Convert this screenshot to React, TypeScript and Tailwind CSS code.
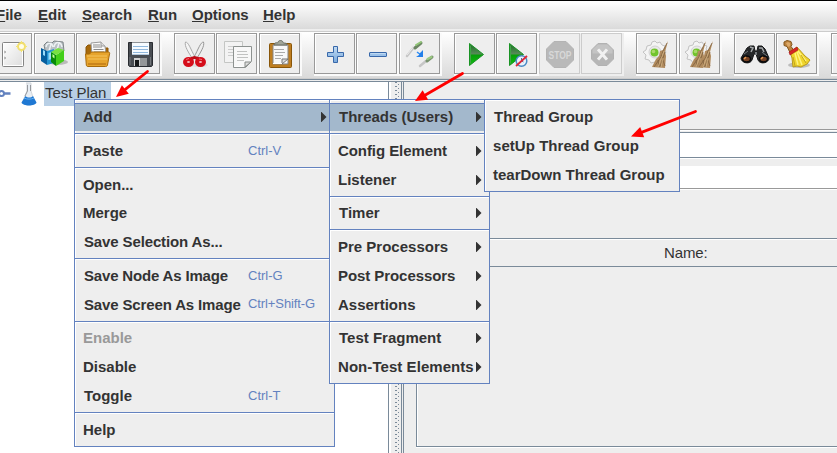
import React from "react";

type Item = {
  label: string;
  keys?: string;
  sub?: boolean;
  selected?: boolean;
  disabled?: boolean;
  h: string;
  tracking?: string;
  indent?: string;
};

const Stroke = ({ children }: { children: React.ReactNode }) => (
  <svg width="39" height="39" viewBox="1 1 39 39" className="block">
    {children}
  </svg>
);

const NewIcon = () => (
  <Stroke>
    <defs>
      <linearGradient id="page" x1="0" y1="0" x2="1" y2="1">
        <stop offset="0" stopColor="#fff" />
        <stop offset="1" stopColor="#dcdcdc" />
      </linearGradient>
    </defs>
    <rect x="11.500" y="9.500" width="21" height="24" rx="1" fill="url(#page)" stroke="#858585" />
    <rect x="12.500" y="10.500" width="19" height="22" fill="none" stroke="#fff" />
    <path d="M13 18l2 1-2 1M13 24l2 1-2 1" fill="none" stroke="#aaa" />
    <circle cx="30.500" cy="13.500" r="3.500" fill="#fffde8" stroke="#f2df6d" strokeWidth="2" />
    <path d="M30.500 8v2M30.500 17v2M25 13.500h2M34 13.500h2" stroke="#f5e66e" />
  </Stroke>
);

const TemplatesIcon = () => (
  <Stroke>
    <ellipse cx="24" cy="29" rx="10" ry="3" fill="#bbb" />
    <path d="M10 12l3-3 5 1 2-2 9 1 1 9-18 4z" fill="#b9c0c4" stroke="#7d8588" />
    <path d="M12 14c1-5 6-5 7 0M20 14c1-6 7-6 8 0M15 18l2-7M23 17l2-7" fill="none" stroke="#eef2f4" strokeWidth="1.500" />
    <path d="M7 15l6 3v14l-6-4z" fill="#065f9f" />
    <path d="M13 18l7-2v14l-7 2z" fill="#2696d2" />
    <path d="M9 17l2 1v5l-2-1zM14.500 20l3-1v7l-3 1z" fill="#9bdcf8" />
    <path d="M17 19l5 3v11l-5-4z" fill="#078a09" />
    <path d="M22 22l8-5v11l-8 5z" fill="#43cf19" />
    <path d="M17 19l7-4 6 2-8 5z" fill="#77e142" />
    <path d="M18.500 21l2 1.500v3l-2-1.500z" fill="#c5ff9c" />
  </Stroke>
);

const OpenIcon = () => (
  <Stroke>
    <path d="M10 17V14l2-2h4l2 3h14v7H10z" fill="#a7690b" stroke="#8b5709" />
    <path d="M15 10l10-1 4 4 1 9-14 1z" fill="#fafafa" stroke="#999" />
    <path d="M17 12h7M17 14h9M17.500 16.500h10M18 19h10" stroke="#8b8b8b" />
    <path d="M25 9v4h4" fill="#ddd" stroke="#999" />
    <path d="M9.500 21h4l2-2h17c1 0 1.500 1 1 2l-2 11c0 1-1 1.500-2 1.500H12c-1 0-1.500-.500-1.700-1.500z" fill="#e7a42c" stroke="#a76a0b" />
    <path d="M11 23h20M12 26h19" stroke="#f3c45e" />
    <path d="M12 31h18" stroke="#ca841b" strokeWidth="2" />
  </Stroke>
);

const SaveIcon = () => (
  <Stroke>
    <path d="M9.500 9.500h24v23l-1 1h-22l-1-1z" fill="#494d52" stroke="#292c31" />
    <rect x="13" y="9.500" width="17" height="12.500" fill="#f6fbff" />
    <path d="M14 13.500h15M14 16.500h15M14 19.500h15" stroke="#90b8dd" />
    <path d="M13 21.500h17" stroke="#b0c7dc" />
    <rect x="15" y="25" width="13" height="8" fill="#cfd0d0" />
    <path d="M21 25h7v8h-7z" fill="#949799" />
    <rect x="16" y="27" width="4" height="6" fill="#17191b" />
    <path d="M11 24v8M31.500 24v8" stroke="#73777b" />
  </Stroke>
);

const CutIcon = () => (
  <Stroke>
    <ellipse cx="25" cy="32" rx="9" ry="2" fill="#ddd" />
    <path d="M11.500 9c3 0 5 7 10 16l-3 1C15 20 10 13 11.500 9z" fill="#f4f4f4" stroke="#aaa" />
    <path d="M29.500 9c-3 0-5 7-10 16l3 1c3.500-6 8.500-13 7-17z" fill="#eee" stroke="#969696" />
    <path d="M17 24l3.500-1 4 1 3 4-4-1-3-1-3 1-4 1z" fill="#bb0c16" />
    <ellipse cx="14.500" cy="29" rx="3.500" ry="3" fill="#f4b8ba" stroke="#d50d1a" strokeWidth="4" />
    <ellipse cx="26.500" cy="29" rx="3.500" ry="3" fill="#f4b8ba" stroke="#d50d1a" strokeWidth="4" />
    <path d="M12 26.500l3-1M25 26l3 .500" stroke="#f46a70" />
  </Stroke>
);

const CopyIcon = () => (
  <Stroke>
    <path d="M8.500 8.500h18v21h-18z" fill="#f3f3f3" stroke="#c4c6c4" />
    <path d="M12 13.500h10M12 16.500h10M12 19.500h6M12 22.500h5" stroke="#ccc" />
    <path d="M17.500 13.500h18v15l-6 6h-12z" fill="#f8f8f8" stroke="#8d9290" />
    <path d="M21 18.500h10M21 21.500h11M21 24.500h11M21 27.500h7" stroke="#c1c2c1" />
    <path d="M29 34v-5h6z" fill="#ddd" stroke="#878b88" />
    <path d="M18.500 33.500h8" stroke="#fff" />
  </Stroke>
);

const PasteIcon = () => (
  <Stroke>
    <rect x="10.500" y="10.500" width="22" height="24" rx="1" fill="#bf7e20" stroke="#895609" />
    <path d="M14 12h15v19H14z" fill="#f8f8f8" stroke="#858585" />
    <path d="M15 12c1-4 4-1 4-3 1-2 4-2 5 0 0 2 4 0 4 3z" fill="#a2a699" stroke="#686c63" />
    <path d="M15 16.500h10M16 19.500h10M16 22.500h8M16 25.500h6" stroke="#aaa" />
    <path d="M23 31v-5h6z" fill="#ddd" stroke="#777" />
    <path d="M14 30.500h9" stroke="#fff" />
  </Stroke>
);

const PlusIcon = () => (
  <Stroke>
    <defs>
      <linearGradient id="blueBar" x1="0" y1="0" x2="0" y2="1">
        <stop offset="0" stopColor="#c3dcf3" />
        <stop offset="1" stopColor="#79a9dc" />
      </linearGradient>
    </defs>
    <path d="M19.500 13.500h4v6h6v4h-6v6h-4v-6h-6v-4h6z" fill="url(#blueBar)" stroke="#3868aa" strokeLinejoin="round" />
  </Stroke>
);

const MinusIcon = () => (
  <Stroke>
    <rect x="13.500" y="19.500" width="17" height="4" rx="0.500" fill="#9cc2e9" stroke="#3868aa" />
    <path d="M14.500 20.500h15" stroke="#c0daf2" />
  </Stroke>
);

const ToggleIcon = () => (
  <Stroke>
    <g strokeLinecap="round">
      <path d="M8 23l7-9" stroke="#c6c6c6" strokeWidth="2.500" />
      <path d="M8.500 21.500l7-9" stroke="#eee" />
      <path d="M16 15l6-5" stroke="#6b8563" strokeWidth="3" />
      <path d="M17 12l5-3" stroke="#91c677" strokeWidth="2" />
      <path d="M21 33l6-5" stroke="#c6c6c6" strokeWidth="2.500" />
      <path d="M28 28l5-4" stroke="#79926f" strokeWidth="3" />
      <path d="M28.500 26l4-2" stroke="#9aca80" strokeWidth="2" />
    </g>
    <path d="M18 19l4 3" stroke="#2e8df5" strokeWidth="1.500" />
    <path d="M24 17v7h-7l3-2 1-2z" fill="#237fea" />
  </Stroke>
);

const Play = () => (
  <>
    <defs>
      <linearGradient id="play" x1="0" y1="0" x2="0" y2="1">
        <stop offset="0" stopColor="#187020" />
        <stop offset=".47" stopColor="#568a58" />
        <stop offset=".53" stopColor="#079f0a" />
        <stop offset="1" stopColor="#13bd12" />
      </linearGradient>
    </defs>
    <path d="M15.500 10.500L29.500 21.500 15.500 32.500z" fill="url(#play)" stroke="#199324" />
    <path d="M16.500 12.500v18" stroke="#41a447" />
  </>
);

const StartIcon = () => <Stroke><Play /></Stroke>;
const NoTimersIcon = () => (
  <Stroke>
    <g transform="translate(-2 0)"><Play /></g>
    <circle cx="25.500" cy="28" r="5.300" fill="#e8f2fc" stroke="#4a8ac4" strokeWidth="1.500" />
    <path d="M25.500 25v3l2 1" stroke="#5376a0" fill="none" />
    <path d="M20 33L31 23" stroke="#de2738" strokeWidth="1.800" />
  </Stroke>
);

const StopIcon = () => (
  <Stroke>
    <path d="M15 8.500h12l7.500 7.500v11L27 34.500H15L7.500 27V16z" fill="#b9b9b9" stroke="#b4b4b4" />
    <text x="9.500" y="25.500" fill="#d8d8d8" fontFamily="Liberation Sans, sans-serif" fontWeight="700" fontSize="11" textLength="23" lengthAdjust="spacingAndGlyphs">STOP</text>
  </Stroke>
);

const ShutdownIcon = () => (
  <Stroke>
    <path d="M17 10.500h9l6.500 6.500v9L26 32.500h-9L10.500 26v-9z" fill="#b6b6b6" stroke="#b2b2b2" />
    <path d="M17 11.500h9l5.500 5v4h-20v-4z" fill="#c4c4c4" />
    <path d="M18 17.500l7 8M25 17.500l-7 8" stroke="#f1f1f1" strokeWidth="3" strokeLinecap="square" />
  </Stroke>
);

const Gear = () => (
  <>
    <path d="M17 9l3-1 2 2 3-1 2 3 3 1-1 3 2 3-2 3 1 3-4 2-2 3-4-1-4 1-2-3-4-1 1-4-3-3 3-2 1-4 4-1z" fill="#f4f4f4" stroke="#c3c3c3" />
    <circle cx="20" cy="19" r="6" fill="#e8e8e8" stroke="#d2d2d2" />
    <circle cx="19.500" cy="19.500" r="4" fill="#72c42d" />
    <circle cx="18.500" cy="18.500" r="1.800" fill="#abd96b" />
  </>
);

const BroomHead = ({ x }: { x: number }) => (
  <g transform={`translate(${x} 0)`}>
    <path d="M32 8l-5 9-3 1-1 5-3 3-4 8 13 1 1-12-1-4 3-11z" fill="#b18b5e" />
    <path d="M31 10l-4 8-2 6-7 10M29 19l-5 15M25 22l4 11M22 27l1 7" stroke="#785b3b" strokeWidth=".7" fill="none" />
    <path d="M28 18l-3 8-3 8M27 25l-2 9" stroke="#d3b586" strokeWidth=".8" fill="none" />
  </g>
);

const ClearIcon = () => <Stroke><g transform="translate(-1 0)"><Gear /></g><BroomHead x={0} /></Stroke>;
const ClearAllIcon = () => <Stroke><g transform="translate(-2 0)"><Gear /></g><BroomHead x={-5} /><BroomHead x={2} /></Stroke>;

const SearchIcon = () => (
  <Stroke>
    <path d="M13 15l3-2h4l1 5h2l1-5h4l3 3 4 9c0 5-9 7-11 2l-2-6h-2l-2 6c-2 5-11 3-11-2z" fill="#252729" stroke="#171819" />
    <path d="M16 14l3 1-2 4M25 15h3l2 4" fill="none" stroke="#a4a8aa" strokeWidth="1.500" />
    <path d="M10 21l4-3M28 19l5 4" stroke="#777c7f" />
    <ellipse cx="12.500" cy="26" rx="4" ry="3" fill="#754124" stroke="#090a0b" strokeWidth="1.500" />
    <ellipse cx="29.500" cy="26" rx="4" ry="3" fill="#754124" stroke="#090a0b" strokeWidth="1.500" />
    <path d="M10 26l2-2M27 26l2-2" stroke="#e49b53" strokeWidth="1.500" />
    <path d="M21 19h2v3h-2z" fill="#75797d" />
  </Stroke>
);

const BroomIcon = () => (
  <Stroke>
    <ellipse cx="23" cy="32" rx="11" ry="3" fill="#bcbcbc" />
    <path d="M8 9l3-1.500 4 1 1 3-1 2 3 4-4 2-3-6-3-1z" fill="#bc833f" stroke="#84581e" />
    <path d="M10 10l2-1 2 1v3l-2 1z" fill="#dba968" />
    <path d="M14 19l7-5 8 9 5 4-3 4-6 3-4-1-4 1-1-9z" fill="#f0d52c" stroke="#b99a1d" />
    <path d="M19 20l3 12M22 18l8 10M21 19l5 13" stroke="#fff37d" strokeWidth="1.500" />
    <path d="M17 24l2 9M25 22l5 8" stroke="#c2a51c" />
    <path d="M13 19l8-5 1 3-8 5z" fill="#d62626" stroke="#a51118" strokeWidth=".6" />
  </Stroke>
);

const toolbar: { icon: React.ReactNode; gap: string; off?: boolean }[] = [
  { icon: <NewIcon />, gap: "mr-[2px]" },
  { icon: <TemplatesIcon />, gap: "mr-px" },
  { icon: <OpenIcon />, gap: "mr-[2px]" },
  { icon: <SaveIcon />, gap: "mr-[14px]" },
  { icon: <CutIcon />, gap: "mr-px" },
  { icon: <CopyIcon />, gap: "mr-[2px]" },
  { icon: <PasteIcon />, gap: "mr-[14px]" },
  { icon: <PlusIcon />, gap: "mr-px" },
  { icon: <MinusIcon />, gap: "mr-[2px]" },
  { icon: <ToggleIcon />, gap: "mr-[14px]" },
  { icon: <StartIcon />, gap: "mr-px" },
  { icon: <NoTimersIcon />, gap: "mr-[2px]" },
  { icon: <StopIcon />, gap: "mr-px", off: true },
  { icon: <ShutdownIcon />, gap: "mr-[14px]", off: true },
  { icon: <ClearIcon />, gap: "mr-[2px]" },
  { icon: <ClearAllIcon />, gap: "mr-[14px]" },
  { icon: <SearchIcon />, gap: "mr-px" },
  { icon: <BroomIcon />, gap: "mr-[14px]" },
  { icon: null, gap: "mr-0" },
];

const MenuRows = ({ groups }: { groups: Item[][] }) => (
  <>
    {groups.map((group, gi) => (
      <div key={gi} className={gi > 0 ? "border-t border-[#6382bf] shadow-[inset_0_1px_#fff]" : ""}>
        {group.map((it) => (
          <div
            key={it.label}
            className={`flex items-start ${it.indent ?? "pl-2"} ${it.h} ${it.selected ? "border-t border-[#6382bf] bg-[#a3b8cc]" : ""} ${it.disabled ? "text-[#999]" : "text-[#333]"}`}
          >
            <span className={`whitespace-pre ${it.keys ? "w-[165px]" : "flex-1"} ${it.tracking ?? ""}`}>{it.label}</span>
            {it.keys && <span className="whitespace-pre text-[13px] font-normal text-[#6382bf]">{it.keys}</span>}
            {it.sub && (
              <svg width="6" height="10" viewBox="0 0 6 10" className="mt-1 mr-[7px] shrink-0">
                <path d="M0 0h.500L5.500 5 .5 10H0z" fill="#333" />
              </svg>
            )}
          </div>
        ))}
      </div>
    ))}
  </>
);

const contextMenu: Item[][] = [
  [{ label: "Add", sub: true, selected: true, h: "h-7 mb-[2px] mt-[3px] pt-1" }],
  [{ label: "Paste", keys: "Ctrl-V", h: "h-[33px] pt-2" }],
  [
    { label: "Open...", h: "h-8 pt-2", tracking: "tracking-[-0.05px]" },
    { label: "Merge", h: "h-[27px] pt-1" },
    { label: "Save Selection As...", h: "h-[31px] pt-[6px]", tracking: "tracking-[-0.13px]", indent: "pl-[9px]" },
  ],
  [
    { label: "Save Node As Image", keys: "Ctrl-G", h: "h-[31px] pt-2", tracking: "tracking-[-0.17px]", indent: "pl-[9px] [&>span:first-child]:w-[164px]" },
    { label: "Save Screen As Image", keys: "Ctrl+Shift-G", h: "h-[31px] pt-[6px]", tracking: "tracking-[-0.14px]", indent: "pl-[9px] [&>span:first-child]:w-[164px] [&>span:last-child]:-mt-px [&>span:last-child]:tracking-[-0.1px]" },
  ],
  [
    { label: "Enable", disabled: true, h: "h-[31px] pt-[7px]" },
    { label: "Disable", h: "h-[29px] pt-[5px]" },
    { label: "Toggle", keys: "Ctrl-T", h: "h-[30px] pt-[5px]", indent: "pl-[9px] [&>span:first-child]:w-[164px]" },
  ],
  [{ label: "Help", h: "h-[33px] pt-2" }],
];

const addMenu: Item[][] = [
  [{ label: "Threads (Users)", sub: true, selected: true, h: "h-7 mb-[2px] mt-[3px] pt-1", indent: "pl-[9px]" }],
  [
    { label: "Config Element", sub: true, h: "h-[33px] pt-2", tracking: "tracking-[-0.07px]" },
    { label: "Listener", sub: true, h: "h-[29px] pt-1" },
  ],
  [{ label: "Timer", sub: true, h: "h-8 pt-[7px]", indent: "pl-[9px]" }],
  [
    { label: "Pre Processors", sub: true, h: "h-[33px] pt-2" },
    { label: "Post Processors", sub: true, h: "h-[29px] pt-1", tracking: "tracking-[-0.07px]" },
    { label: "Assertions", sub: true, h: "h-[29px] pt-1" },
  ],
  [
    { label: "Test Fragment", sub: true, h: "h-8 pt-[7px]", indent: "pl-[9px]" },
    { label: "Non-Test Elements", sub: true, h: "h-[29px] pt-1", tracking: "tracking-[0.06px]" },
  ],
];

const threadsMenu: Item[][] = [
  [
    { label: "Thread Group", h: "h-[34px] pt-2", indent: "pl-[9px]" },
    { label: "setUp Thread Group", h: "h-[29px] pt-[3px]", tracking: "tracking-[0.05px]" },
    { label: "tearDown Thread Group", h: "h-7 pt-[3px]" },
  ],
];

const mainMenu = [
  { label: "File", w: "w-[42px]" },
  { label: "Edit", w: "w-[44px]" },
  { label: "Search", w: "w-[66px]" },
  { label: "Run", w: "w-[44px]" },
  { label: "Options", w: "w-[71px]" },
  { label: "Help", w: "w-[50px]" },
];

const RedArrow = ({ x1, y1, x2, y2 }: { x1: number; y1: number; x2: number; y2: number }) => {
  const a = Math.atan2(y2 - y1, x2 - x1);
  const c = Math.cos(a);
  const s = Math.sin(a);
  const bx = x2 - 12 * c;
  const by = y2 - 12 * s;
  return (
    <g fill="#f00" stroke="#f00">
      <path d={`M${x1} ${y1}L${bx} ${by}`} strokeWidth="2.800" strokeLinecap="round" />
      <path d={`M${x2} ${y2}L${bx - 5.5 * s} ${by + 5.5 * c}L${bx + 5.5 * s} ${by - 5.5 * c}z`} stroke="none" />
    </g>
  );
};

export default function App() {
  return (
    <div className="relative flex h-[453px] w-[837px] flex-col overflow-hidden bg-[#eee] font-['Liberation_Sans',Arial,sans-serif] text-[15px] leading-[17px] text-[#333]">
      <nav className="flex h-[29px] shrink-0 items-start border-t border-black bg-linear-to-b from-white to-[#dadada] pt-[5px] font-bold">
        <div className="-ml-1 flex">
          {mainMenu.map((m) => (
            <span key={m.label} className={m.w}>
              <span className="underline decoration-1 underline-offset-1">{m.label[0]}</span>
              {m.label.slice(1)}
            </span>
          ))}
        </div>
      </nav>
      <div className="h-[3px] shrink-0 border-b border-[#ccc] bg-[#eee]" />
      <div className="h-[47px] shrink-0 overflow-hidden border-b border-[#ccc] bg-linear-to-b from-white to-[#dadada] pt-px">
        <div className="-ml-[9px] flex w-[900px]">
          {toolbar.map((b, i) => (
            <div
              key={i}
              className={`size-[41px] shrink-0 border bg-[#eee] ${b.gap} ${b.off ? "border-[#ccc] shadow-[1px_1px_0_1px_#eee]" : "border-[#999] shadow-[inset_1px_1px_#fff,1px_1px_0_1px_#fafafa]"}`}
            >
              {b.icon}
            </div>
          ))}
        </div>
      </div>
      <div className="h-[3px] shrink-0 border-y border-[#7a8a99] bg-[#eee]" />
      <main className="flex min-h-0 flex-1">
        <section className="w-[389px] border-r border-[#7a8a99] bg-white">
          <div className="flex h-6 items-center">
            <svg width="12" height="24" viewBox="0 0 12 24" className="shrink-0">
              <circle cx="1.500" cy="11.500" r="2.500" fill="#fff" stroke="#6382bf" strokeWidth="2" />
              <path d="M4 11.500h6.500" stroke="#6382bf" strokeWidth="2.500" />
            </svg>
            <svg width="18" height="24" viewBox="0 0 18 24" className="ml-2 shrink-0">
              <path d="M6 1h5M7 1v8L2.500 20c2 4 10 4 12 0L11 9V1" fill="#e8eef4" stroke="#d3d7dc" />
              <path d="M5.500 14L1.500 20.500c1 4 14 4 15 0L13 14c-2 2-5.500 2-7.500 0z" fill="#1f78d3" />
              <path d="M4 16c3 1.500 7 1.500 10 0" fill="none" stroke="#66b1f0" />
              <path d="M7.500 3v6L5 14M10.500 3v6" fill="none" stroke="#96999e" />
            </svg>
            <span className="ml-[6px] flex h-6 w-[67px] items-start bg-[#b8cfe5] pt-[2px] pl-px tracking-[-0.04px]">Test Plan</span>
          </div>
        </section>
        <div className="flex w-[12px] gap-px border-l-2 border-white pl-1">
          <div className="w-[2px] bg-[repeating-linear-gradient(to_bottom,#7a8a99_0_1px,transparent_1px_4px)]" />
          <div className="mt-[2px] w-px bg-[repeating-linear-gradient(to_bottom,#7a8a99_0_1px,transparent_1px_4px)]" />
        </div>
        <section className="flex flex-1 flex-col border-l border-[#7a8a99]">
          <div className="ml-px flex flex-1 flex-col border-l border-[#7a8a99]">
            <div className="h-[48px] border-b border-[#999] shadow-[0_1px_#fff]" />
            <div className="mt-[2px] h-[26px] border-y border-[#7a8a99] bg-white shadow-[0_1px_#fff]" />
            <div className="mt-[8px] h-[23px] border-b border-[#999] bg-white shadow-[0_1px_#fff]" />
            <div className="mt-[49px] ml-[12px] h-[209px] border-y border-l border-[#7a8a99] shadow-[inset_1px_1px_#fff,0_1px_#fff]">
              <div className="h-7 border-b border-[#7a8a99] pt-[5px] pl-[247px] tracking-[-0.1px]">Name:</div>
            </div>
          </div>
        </section>
      </main>
      <div className="absolute top-[99px] left-[74px] h-[348px] w-[261px] border border-[#6382bf] bg-[#eee] font-bold shadow-[inset_1px_1px_#fff]">
        <MenuRows groups={contextMenu} />
      </div>
      <div className="absolute top-[99px] left-[329px] h-[285px] w-[161px] border border-[#6382bf] bg-[#eee] font-bold shadow-[inset_1px_1px_#fff]">
        <MenuRows groups={addMenu} />
      </div>
      <div className="absolute top-[99px] left-[484px] h-[93px] w-[196px] border border-[#6382bf] bg-[#eee] font-bold shadow-[inset_1px_1px_#fff]">
        <MenuRows groups={threadsMenu} />
      </div>
      <svg width="837" height="453" viewBox="0 0 837 453" className="pointer-events-none absolute inset-0">
        <RedArrow x1={147.500} y1={71.500} x2={116} y2={97} />
        <RedArrow x1={462.500} y1={73.500} x2={415} y2={101} />
        <RedArrow x1={695.500} y1={111.500} x2={631} y2={136.500} />
      </svg>
    </div>
  );
}
